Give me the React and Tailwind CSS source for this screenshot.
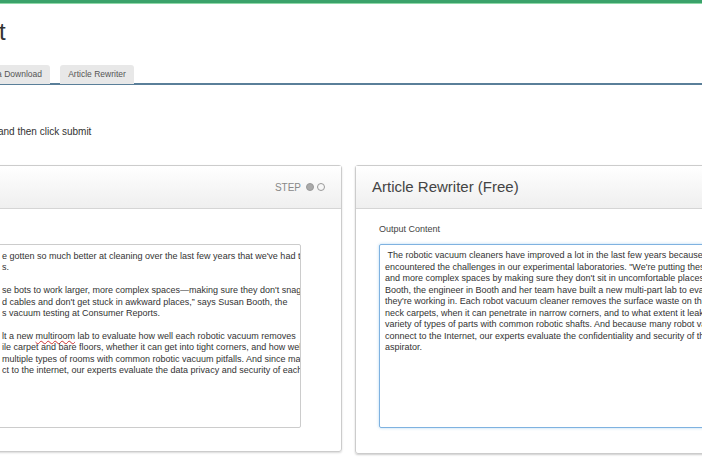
export default function App() {
  const left = [
    "e gotten so much better at cleaning over the last few years that we've had to up",
    "s.",
    "",
    "se bots to work larger, more complex spaces\u2014making sure they don't snag on",
    "d cables and don't get stuck in awkward places,\u201d says Susan Booth, the",
    "s vacuum testing at Consumer Reports.",
    "",
    "MULTI",
    "ile carpet and bare floors, whether it can get into tight corners, and how well it",
    "multiple types of rooms with common robotic vacuum pitfalls. And since many",
    "ct to the internet, our experts evaluate the data privacy and security of each",
  ];
  const right = [
    "\u00a0The robotic vacuum cleaners have improved a lot in the last few years because we have",
    "encountered the challenges in our experimental laboratories. \"We're putting these robots",
    "and more complex spaces by making sure they don't sit in uncomfortable places,\" explains",
    "Booth, the engineer in Booth and her team have built a new multi-part lab to evaluate",
    "they're working in. Each robot vacuum cleaner removes the surface waste on the carpet",
    "neck carpets, when it can penetrate in narrow corners, and to what extent it leaked and",
    "variety of types of parts with common robotic shafts. And because many robot vacuums",
    "connect to the Internet, our experts evaluate the confidentiality and security of the data",
    "aspirator.",
  ];
  return (
    <div className="w-[702px] h-[459px] overflow-hidden bg-white relative" style={{ fontFamily: '"Liberation Sans", Arial, sans-serif' }}>
      <div className="h-[4px] bg-[#3aa26a] border-b border-[#8fd9a8]"></div>
      <div className="text-[24px] text-[#333] leading-none mt-[16px] ml-[-1px]">t</div>
      <div className="mt-[21px] flex gap-[10px] ml-[-30px] border-b-2 border-[#5a7f99] h-[20px]">
        <div className="w-[80px] h-[19px] bg-[#e8e8e8] rounded-t-[3px] text-[8.5px] text-[#555] flex items-center justify-end pr-[8px]">Media Download</div>
        <div className="w-[74px] h-[19px] bg-[#e8e8e8] rounded-t-[3px] text-[8.5px] text-[#555] flex items-center justify-center">Article Rewriter</div>
      </div>
      <div className="mt-[42px] text-[10px] text-[#333] leading-none ml-[-2px]">and then click submit</div>
      <div className="mt-[28px] flex gap-[13px] ml-[-300px]">
        <div className="w-[642px] h-[287px] shrink-0 border border-[#ccc] rounded-[3px] shadow-[0_1px_2px_rgba(0,0,0,0.15)] flex flex-col">
          <div className="h-[43px] bg-gradient-to-b from-white to-[#efefef] border-b border-[#d5d5d5] flex items-center justify-between pr-[16px] pl-[139px]">
            <span className="text-[16px] text-[#444]">Article Rewriter (Free)</span>
            <span className="flex items-center gap-[3px] text-[10px] text-[#888]">STEP
              <span className="ml-[2px] w-[8px] h-[8px] rounded-full bg-[#aaa] border border-[#999]"></span>
              <span className="w-[8px] h-[8px] rounded-full border border-[#999]"></span>
            </span>
          </div>
          <div className="mt-[35px] ml-[100px] w-[500px] h-[184px] border border-[#ccc] rounded-[2px] overflow-hidden pl-[200px] pt-[6px]">
            {left.map((l, i) => (
              <div key={i} className="h-[11.4px] text-[9px] leading-[11.4px] text-[#333] whitespace-nowrap">
                {l === "MULTI" ? (<>lt a new <span className="underline decoration-wavy decoration-[#c33]">multiroom</span> lab to evaluate how well each robotic vacuum removes</>) : l}
              </div>
            ))}
          </div>
        </div>
        <div className="w-[400px] h-[289px] shrink-0 border border-[#ccc] rounded-[3px] shadow-[0_1px_2px_rgba(0,0,0,0.2)] flex flex-col">
          <div className="h-[43px] bg-gradient-to-b from-white to-[#efefef] border-b border-[#d5d5d5] flex items-center pl-[16px]">
            <span className="text-[15px] text-[#444]">Article Rewriter (Free)</span>
          </div>
          <div className="mt-[16px] ml-[23px] text-[9px] text-[#444] leading-none">Output Content</div>
          <div className="mt-[10px] ml-[23px] w-[360px] h-[184px] border border-[#7fb2e0] rounded-[2px] overflow-hidden pl-[5px] pt-[5px] shadow-[0_0_3px_rgba(102,175,233,0.5)]">
            {right.map((l, i) => (
              <div key={i} className="h-[11.5px] text-[9px] leading-[11.5px] text-[#333] whitespace-nowrap">{l}</div>
            ))}
          </div>
        </div>
      </div>
    </div>
  );
}
